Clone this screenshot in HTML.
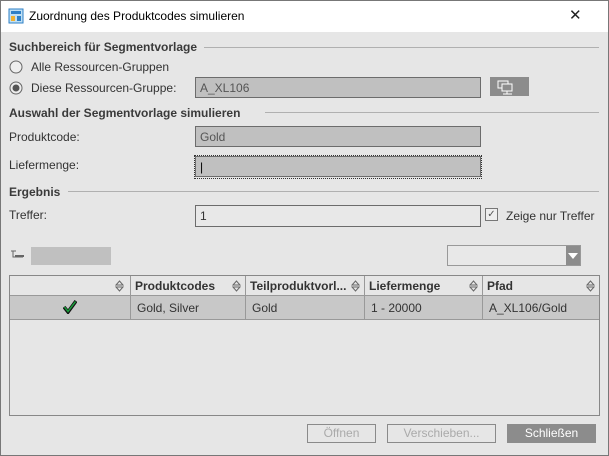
<!DOCTYPE html>
<html><head><style>
*{box-sizing:border-box;margin:0;padding:0}
body{width:609px;height:456px;font-family:"Liberation Sans",Arial,sans-serif;font-size:12px;color:#333;background:#e6e6e6;position:relative;overflow:hidden}
.a{position:absolute}
.t{position:absolute;white-space:nowrap}
.b{font-weight:bold;color:#3a3a3a}
.line{position:absolute;height:1px;background:#b0b0b0}
.fld{position:absolute;background:#c0c0c0;border:1px solid #6c6c6c;padding:3px 4px;color:#555;font-size:12px}
.th{position:absolute;top:0;height:20px;border-right:1px solid #999;font-weight:bold;padding:3px 4px;color:#333}
.td{position:absolute;top:20px;height:24px;border-right:1px solid #999;padding:5px 6px;color:#333}
.sort{position:absolute;right:3px;top:4px;width:9px;height:12px}
.btn{position:absolute;height:19px;border:1px solid #8a8a8a;text-align:center;line-height:17px;color:#aaa;font-size:12px}
</style></head><body>
<div class="a" style="left:0;top:0;width:609px;height:456px;border:1px solid #777"></div>
<div class="a" style="left:1px;top:1px;width:607px;height:31px;background:#fff"></div>
<svg class="a" style="left:8px;top:8px" width="16" height="16"><rect x="1" y="1" width="14" height="14" fill="#bfe0f5" stroke="#2e7fc6"/><rect x="3" y="3" width="10" height="3" fill="#2e7fc6"/><rect x="3" y="8" width="4" height="5" fill="#f0b030"/><rect x="9" y="8" width="4" height="5" fill="#2e7fc6"/></svg>
<div class="t" style="left:29px;top:9px;font-size:12px;color:#000">Zuordnung des Produktcodes simulieren</div>
<div class="t" style="left:569px;top:6px;font-size:15px;color:#222">✕</div>

<div class="t b" style="left:9px;top:40px">Suchbereich für Segmentvorlage</div>
<div class="line" style="left:204px;top:47px;width:395px"></div>
<svg class="a" style="left:9px;top:60px" width="14" height="14"><circle cx="7" cy="7" r="6" fill="#eee" stroke="#666"/></svg>
<div class="t" style="left:31px;top:60px">Alle Ressourcen-Gruppen</div>
<svg class="a" style="left:9px;top:81px" width="14" height="14"><circle cx="7" cy="7" r="6" fill="#eee" stroke="#666"/><circle cx="7" cy="7" r="3.5" fill="#555"/></svg>
<div class="t" style="left:31px;top:81px">Diese Ressourcen-Gruppe:</div>
<div class="fld" style="left:195px;top:77px;width:286px;height:21px">A_XL106</div>
<div class="a" style="left:490px;top:77px;width:39px;height:19px;background:#8c8c8c"></div>
<svg class="a" style="left:496px;top:79px" width="24" height="16"><rect x="2" y="2" width="10" height="7" fill="none" stroke="#fff"/><rect x="6" y="5" width="10" height="7" fill="#8c8c8c" stroke="#fff"/><path d="M11 12v3M7 15h9" stroke="#fff"/></svg>

<div class="t b" style="left:9px;top:106px">Auswahl der Segmentvorlage simulieren</div>
<div class="line" style="left:265px;top:112px;width:334px"></div>
<div class="t" style="left:9px;top:130px">Produktcode:</div>
<div class="fld" style="left:195px;top:126px;width:286px;height:21px">Gold</div>
<div class="t" style="left:9px;top:158px">Liefermenge:</div>
<div class="a" style="left:194px;top:155px;width:288px;height:24px;border:1px dotted #333"></div>
<div class="fld" style="left:195px;top:156px;width:286px;height:21px;color:#000">|</div>

<div class="t b" style="left:9px;top:185px">Ergebnis</div>
<div class="line" style="left:68px;top:191px;width:531px"></div>
<div class="t" style="left:9px;top:208px">Treffer:</div>
<div class="fld" style="left:195px;top:205px;width:286px;height:22px;background:#e8e8e8;color:#333">1</div>
<div class="a" style="left:485px;top:208px;width:13px;height:13px;border:1px solid #777;background:#eee;font-size:10px;line-height:11px;text-align:center;color:#555">✓</div>
<div class="t" style="left:506px;top:209px">Zeige nur Treffer</div>

<svg class="a" style="left:10px;top:250px" width="16" height="10"><path d="M1 1h5M3 1v6h10" stroke="#666" fill="none"/><rect x="5" y="5" width="9" height="2" fill="#666"/></svg>
<div class="a" style="left:31px;top:247px;width:80px;height:18px;background:#c0c0c0"></div>
<div class="a" style="left:447px;top:245px;width:134px;height:21px;border:1px solid #999;background:#e8e8e8"></div>
<div class="a" style="left:566px;top:246px;width:14px;height:19px;background:#8c8c8c"></div>
<svg class="a" style="left:568px;top:252px" width="10" height="8"><path d="M0 1h10L5 7z" fill="#fff"/></svg>

<div class="a" style="left:9px;top:275px;width:591px;height:141px;border:1px solid #888;background:#e6e6e6">
<div class="a" style="left:0;top:0;width:589px;height:20px;background:#e6e6e6;border-bottom:1px solid #999"></div>
<div class="a" style="left:0;top:20px;width:589px;height:24px;background:#c8c8c8;border-bottom:1px solid #999"></div>
<div class="th" style="left:0;width:121px"></div>
<div class="th" style="left:121px;width:115px">Produktcodes</div>
<div class="th" style="left:236px;width:119px">Teilproduktvorl...</div>
<div class="th" style="left:355px;width:118px">Liefermenge</div>
<div class="th" style="left:473px;width:116px;border-right:none">Pfad</div>
<svg class="sort" style="left:105px"><path d="M1 5L4.5 1 8 5zM1 7l3.5 4L8 7z" fill="none" stroke="#666"/></svg>
<svg class="sort" style="left:222px"><path d="M1 5L4.5 1 8 5zM1 7l3.5 4L8 7z" fill="none" stroke="#666"/></svg>
<svg class="sort" style="left:341px"><path d="M1 5L4.5 1 8 5zM1 7l3.5 4L8 7z" fill="none" stroke="#666"/></svg>
<svg class="sort" style="left:459px"><path d="M1 5L4.5 1 8 5zM1 7l3.5 4L8 7z" fill="none" stroke="#666"/></svg>
<svg class="sort" style="left:576px"><path d="M1 5L4.5 1 8 5zM1 7l3.5 4L8 7z" fill="none" stroke="#666"/></svg>
<div class="td" style="left:0;width:121px"></div>
<svg class="a" style="left:53px;top:24px" width="14" height="14"><path d="M1 7l4 5L13 1" stroke="#111" stroke-width="3.5" fill="none"/><path d="M1.5 7l3.5 4.5L12.5 1.5" stroke="#1a9a3a" stroke-width="1.5" fill="none"/></svg>
<div class="td" style="left:121px;width:115px">Gold, Silver</div>
<div class="td" style="left:236px;width:119px">Gold</div>
<div class="td" style="left:355px;width:118px">1 - 20000</div>
<div class="td" style="left:473px;width:116px;border-right:none">A_XL106/Gold</div>
</div>

<div class="btn" style="left:307px;top:424px;width:69px">Öffnen</div>
<div class="btn" style="left:387px;top:424px;width:109px">Verschieben...</div>
<div class="btn" style="left:507px;top:424px;width:89px;background:#8c8c8c;border-color:#8c8c8c;color:#fff">Schließen</div>
</body></html>
